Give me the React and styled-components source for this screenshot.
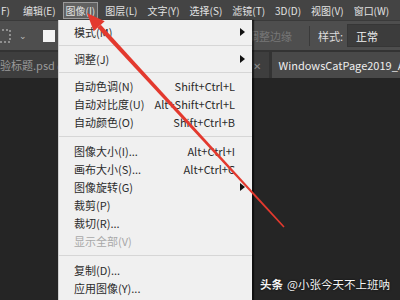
import React from "react";
import styled, { createGlobalStyle } from "styled-components";

const GlobalStyle = createGlobalStyle`
  body {
    margin: 0;
    background: #252525;
    overflow: hidden;
  }
`;

const FONT = `"Noto Sans CJK SC", "Noto Sans", sans-serif`;

const Screen = styled.div`
  position: relative;
  width: 400px;
  height: 300px;
  display: flex;
  flex-direction: column;
  overflow: hidden;
  font-family: ${FONT};
  background: #252525;
`;

const MenuBar = styled.div`
  height: 20px;
  flex: none;
  display: flex;
  align-items: center;
  gap: 4px;
  padding-left: 0;
  background: #444444;
  color: #e2e2e2;
  font-size: 10px;
  white-space: nowrap;
`;

const MenuTitle = styled.span`
  padding: 0 2px;
  line-height: 15px;
  border: 1px solid ${(p) => (p.$active ? "#9a9a9a" : "transparent")};
  background: ${(p) => (p.$active ? "#616161" : "transparent")};
  &:first-child {
    margin-left: -2px;
    margin-right: 3px;
  }
`;

const ToolBar = styled.div`
  height: 30px;
  flex: none;
  display: flex;
  align-items: center;
  background: #4e4e4e;
  border-top: 1px solid #3a3a3a;
  box-sizing: border-box;
  font-size: 11px;
`;

const Chevron = styled.span`
  margin-left: 8px;
  color: #bbbbbb;
  font-size: 9px;
`;

const Swatch = styled.div`
  width: 12px;
  height: 12px;
  margin-left: 16px;
  background: #f4f4f4;
`;

const Spacer = styled.div`
  flex: 1;
`;

const ToolText = styled.span`
  color: ${(p) => (p.$disabled ? "#777777" : "#dddddd")};
`;

const VSep = styled.div`
  width: 1px;
  height: 20px;
  margin: 0 8px 0 17px;
  background: #3a3a3a;
`;

const Select = styled.div`
  width: 44px;
  height: 21px;
  margin-left: 4px;
  padding-left: 8px;
  display: flex;
  align-items: center;
  background: #3c3c3c;
  border: 1px solid #363636;
  border-right: none;
  color: #f0f0f0;
`;

const TabBar = styled.div`
  height: 28px;
  flex: none;
  display: flex;
  align-items: flex-end;
  gap: 3px;
  background: #333333;
  font-size: 11px;
`;

const Tab = styled.div`
  height: 26px;
  display: flex;
  align-items: center;
  gap: 8px;
  width: ${(p) => p.$w}px;
  padding-left: ${(p) => p.$pl}px;
  box-sizing: border-box;
  background: ${(p) => (p.$active ? "#494949" : "#3e3e3e")};
  color: ${(p) => (p.$active ? "#eeeeee" : "#9a9a9a")};
  white-space: nowrap;
  overflow: hidden;
`;

const TabSpacer = styled.span`
  flex: 1;
`;

const Close = styled.span`
  color: #8a8a8a;
  font-size: 10px;
  margin-right: 8px;
`;

const Canvas = styled.div`
  flex: 1;
  background: #252525;
`;

const Dropdown = styled.div`
  position: absolute;
  left: 58px;
  top: 20px;
  width: 194px;
  height: 290px;
  padding-top: 3px;
  box-sizing: border-box;
  background: #f0f0f0;
  border-left: 1px solid #cfcfcf;
  box-shadow: 2px 0 1px rgba(0, 0, 0, 0.55);
  font-size: 11px;
  color: #2b2b2b;
`;

const Item = styled.div`
  height: 18px;
  display: flex;
  align-items: center;
  justify-content: space-between;
  padding: 0 ${(p) => (p.$arrow ? 7 : 17)}px 0 15px;
  color: ${(p) => (p.$disabled ? "#a8a8a8" : "#2b2b2b")};
  white-space: nowrap;
`;

const Shortcut = styled.span`
  color: #2b2b2b;
`;

const SubArrow = styled.span`
  width: 0;
  height: 0;
  border-top: 4px solid transparent;
  border-bottom: 4px solid transparent;
  border-left: 5px solid #111111;
`;

const Separator = styled.div`
  height: ${(p) => p.$h || 10}px;
  display: flex;
  align-items: center;
  &::after {
    content: "";
    flex: 1;
    height: 1px;
    background: #d6d6d6;
  }
`;

const Pointer = styled.svg`
  position: absolute;
  left: 0;
  top: 0;
  pointer-events: none;
`;

const Watermark = styled.div`
  position: absolute;
  right: 10px;
  bottom: 8px;
  color: #f4f4f4;
  font-size: 11.5px;
  text-shadow: 0 0 2px rgba(0, 0, 0, 0.9);
  white-space: nowrap;
  b {
    font-weight: 700;
    margin-right: 4px;
  }
`;

const menus = ["F)", "编辑(E)", "图像(I)", "图层(L)", "文字(Y)", "选择(S)", "滤镜(T)", "3D(D)", "视图(V)", "窗口(W)"];

const entries = [
  { label: "模式(M)", arrow: true },
  { sep: 9 },
  { label: "调整(J)", arrow: true },
  { sep: 9 },
  { label: "自动色调(N)", key: "Shift+Ctrl+L" },
  { label: "自动对比度(U)", key: "Alt+Shift+Ctrl+L" },
  { label: "自动颜色(O)", key: "Shift+Ctrl+B" },
  { sep: 11 },
  { label: "图像大小(I)...", key: "Alt+Ctrl+I" },
  { label: "画布大小(S)...", key: "Alt+Ctrl+C" },
  { label: "图像旋转(G)", arrow: true },
  { label: "裁剪(P)" },
  { label: "裁切(R)..." },
  { label: "显示全部(V)", disabled: true },
  { sep: 11 },
  { label: "复制(D)..." },
  { label: "应用图像(Y)..." },
];

const App = () => {
  // arrow shaft: tapered from tail to head
  const tail = [284, 227];
  const tip = [87, 13];
  const dx = tip[0] - tail[0];
  const dy = tip[1] - tail[1];
  const len = Math.hypot(dx, dy);
  const ux = dx / len;
  const uy = dy / len;
  const px = -uy;
  const py = ux;
  const head = 18;
  const base = [tip[0] - ux * head, tip[1] - uy * head];
  const shaft = [
    [tail[0] + px * 0.8, tail[1] + py * 0.8],
    [base[0] + px * 2.2, base[1] + py * 2.2],
    [base[0] - px * 2.2, base[1] - py * 2.2],
    [tail[0] - px * 0.8, tail[1] - py * 0.8],
  ];
  const tri = [
    tip,
    [base[0] + px * 7.5, base[1] + py * 7.5],
    [base[0] - px * 7.5, base[1] - py * 7.5],
  ];
  const pts = (a) => a.map((p) => p.join(",")).join(" ");

  return (
    <>
      <GlobalStyle />
      <Screen>
        <MenuBar>
          {menus.map((m) => (
            <MenuTitle key={m} $active={m === "图像(I)"}>
              {m}
            </MenuTitle>
          ))}
        </MenuBar>
        <ToolBar>
          <svg width="14" height="14" style={{ marginLeft: -3 }}>
            <rect x="1" y="1" width="12" height="12" fill="none" stroke="#d0d0d0" strokeDasharray="2 2" />
          </svg>
          <Chevron>⌄</Chevron>
          <Swatch />
          <Spacer />
          <ToolText $disabled>调整边缘</ToolText>
          <VSep />
          <ToolText>样式:</ToolText>
          <Select>正常</Select>
        </ToolBar>
        <TabBar>
          <Tab $w={275} $pl={0}>
            验标题.psd @ 100%
            <TabSpacer />
            <Close>✕</Close>
          </Tab>
          <Tab $active $w={130} $pl={6}>
            WindowsCatPage2019_A
          </Tab>
        </TabBar>
        <Canvas />
        <Dropdown>
          {entries.map((e, i) =>
            e.sep ? (
              <Separator key={i} $h={e.sep} />
            ) : (
              <Item key={i} $arrow={e.arrow} $disabled={e.disabled}>
                <span>{e.label}</span>
                {e.key && <Shortcut>{e.key}</Shortcut>}
                {e.arrow && <SubArrow />}
              </Item>
            )
          )}
        </Dropdown>
        <Pointer width="400" height="300">
          <polygon points={pts(shaft)} fill="#e3392e" />
          <polygon points={pts(tri)} fill="#e3392e" />
        </Pointer>
        <Watermark>
          <b>头条</b>@小张今天不上班呐
        </Watermark>
      </Screen>
    </>
  );
};

export default App;
